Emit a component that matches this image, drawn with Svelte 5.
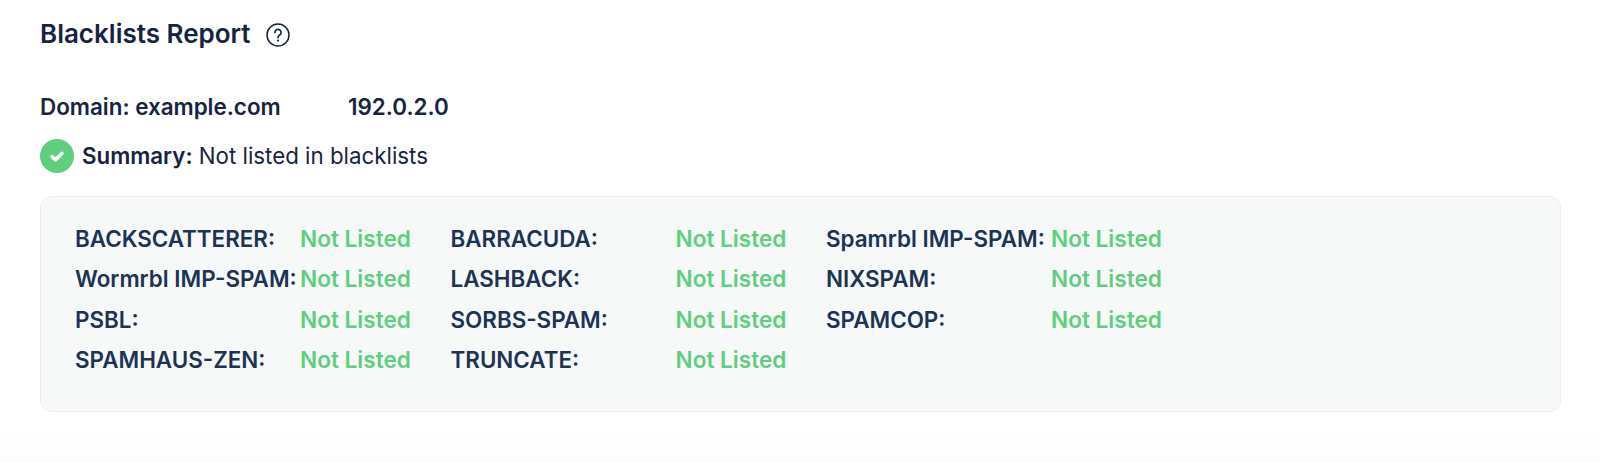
<script>
  const lists = [
    'BACKSCATTERER', 'BARRACUDA', 'Spamrbl IMP-SPAM',
    'Wormrbl IMP-SPAM', 'LASHBACK', 'NIXSPAM',
    'PSBL', 'SORBS-SPAM', 'SPAMCOP',
    'SPAMHAUS-ZEN', 'TRUNCATE'
  ]
</script>

<section class="report">
  <h2 class="title">
    Blacklists Report
    <svg class="help" viewBox="0 0 24 24" width="24" height="24" aria-hidden="true">
      <circle cx="12" cy="12" r="11" fill="none" stroke="currentColor" stroke-width="1.5" />
      <path d="M8.9 9.4a3.1 3.1 0 1 1 4.7 2.7c-1 .6-1.6 1.2-1.6 2.4" fill="none" stroke="currentColor" stroke-width="1.7" stroke-linecap="round" />
      <circle cx="12" cy="17.6" r="1.1" fill="currentColor" />
    </svg>
  </h2>

  <div class="target">
    <span class="domain">Domain: example.com</span>
    <span>192.0.2.0</span>
  </div>

  <div class="summary">
    <svg viewBox="0 0 34 34" width="34" height="34" aria-hidden="true">
      <circle cx="17" cy="17" r="17" fill="#5fcf7f" />
      <path d="M12.2 17.6l3.3 3.1 6.3-6.3" fill="none" stroke="#fff" stroke-width="3.6" stroke-linecap="round" stroke-linejoin="round" />
    </svg>
    <span><strong>Summary:</strong> Not listed in blacklists</span>
  </div>

  <div class="box">
    <div class="grid">
      {#each lists as name}
        <div class="row">
          <span class="name">{name}:</span>
          <span class="status">Not Listed</span>
        </div>
      {/each}
    </div>
  </div>
</section>

<style>
  :global(body) {
    background: linear-gradient(#fff 430px, #fcfcfc 462px);
    min-height: 462px;
  }
  .report {
    height: 462px;
    box-sizing: border-box;
    padding: 17px 39px 0 40px;
    font-family: Inter, "Liberation Sans", sans-serif;
    color: #16243f;
  }
  .title {
    display: flex;
    align-items: center;
    gap: 15px;
    margin: 0;
    height: 32px;
    font-size: 26px;
    font-weight: 600;
  }
  .help { margin-top: 3px; }
  .target {
    display: flex;
    margin-top: 44px;
    font-size: 22.4px;
    font-weight: 600;
    line-height: 28px;
  }
  .domain { width: 308px; }
  .summary {
    display: flex;
    align-items: center;
    gap: 8px;
    margin-top: 18px;
    font-size: 22.3px;
    line-height: 34px;
  }
  .summary strong { font-weight: 600; }
  .box {
    margin-top: 23px;
    height: 216px;
    box-sizing: border-box;
    padding: 21px 34px;
    background: #f7f9f9;
    border: 1px solid #ececec;
    border-radius: 12px;
  }
  .grid {
    display: grid;
    grid-template-columns: repeat(3, 375.5px);
    grid-auto-rows: 40.5px;
  }
  .row {
    display: grid;
    grid-template-columns: 225px auto;
    align-items: center;
    font-size: 22.4px;
    font-weight: 600;
  }
  .name { color: #1c3354; white-space: nowrap; }
  .status { color: #5fcf7f; font-size: 22.6px; }
</style>
